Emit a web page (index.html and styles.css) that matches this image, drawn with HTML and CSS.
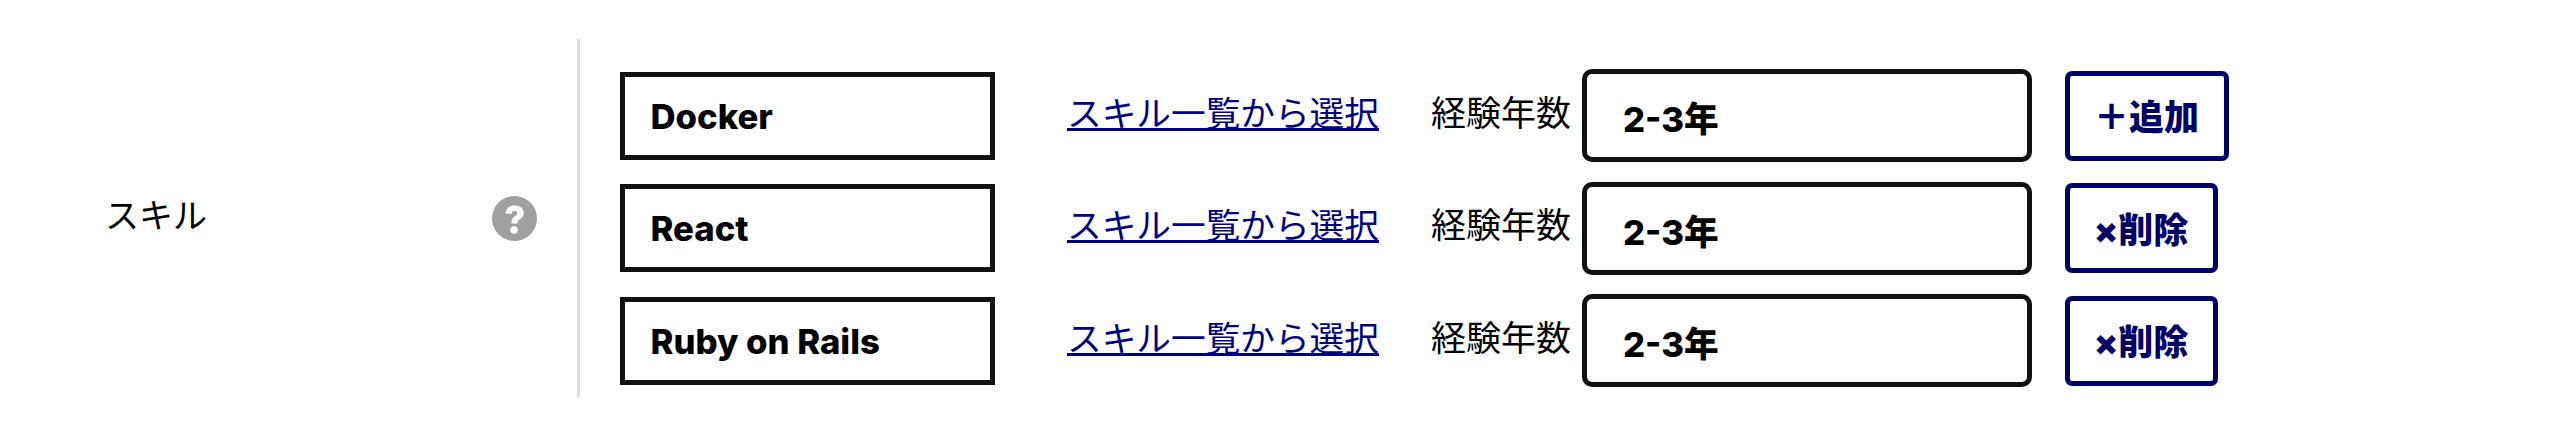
FILE: index.html
```html
<!DOCTYPE html>
<html lang="ja">
<head>
<meta charset="utf-8">
<title>スキル</title>
<link rel="stylesheet" href="styles.css">
</head>
<body>
<div class="field">
  <div class="field-label">
    <span class="label-text">スキル</span>
    <svg class="help" viewBox="0 0 45 45" aria-hidden="true">
      <circle cx="22.5" cy="22.5" r="22.5" fill="#a0a0a0"/>
      <path d="M13.500 17.500c.4-5 3.900-8 9.200-8 5.300 0 9 3 9 7.400 0 3.100-1.600 4.800-3.900 6.400-1.800 1.200-2.400 2-2.400 4.200h-6c-.1-3.700 1-5.500 3.400-7.200 1.700-1.200 2.500-2 2.500-3.100 0-1.400-1.100-2.300-2.700-2.300-1.800 0-2.900 1-3.100 3z" fill="#fff"/>
      <circle cx="22" cy="34" r="3.800" fill="#fff"/>
    </svg>
  </div>
  <div class="field-body">
    <div class="row">
      <input class="skill" type="text" value="Docker">
      <a class="pick" href="#">スキル一覧から選択</a>
      <span class="years-label">経験年数</span>
      <input class="years" type="text" value="2-3年">
      <button class="btn btn-add" type="button">＋追加</button>
    </div>
    <div class="row">
      <input class="skill" type="text" value="React">
      <a class="pick" href="#">スキル一覧から選択</a>
      <span class="years-label">経験年数</span>
      <input class="years" type="text" value="2-3年">
      <button class="btn" type="button">×削除</button>
    </div>
    <div class="row">
      <input class="skill" type="text" value="Ruby on Rails">
      <a class="pick" href="#">スキル一覧から選択</a>
      <span class="years-label">経験年数</span>
      <input class="years" type="text" value="2-3年">
      <button class="btn" type="button">×削除</button>
    </div>
  </div>
</div>
</body>
</html>
```
FILE: styles.css
```css
* { box-sizing: border-box; }
html, body { margin: 0; background: #fff; }
body {
  padding-top: 39px;
  font-family: "Inter", "Noto Sans CJK JP", sans-serif;
  color: #000;
}
.field { display: flex; height: 358px; }
.field-label {
  width: 577px;
  display: flex;
  align-items: center;
  justify-content: space-between;
  padding: 0 40px 0 105px;
}
.label-text {
  font-family: "Noto Sans CJK JP", sans-serif;
  font-size: 34px;
  font-weight: 400;
  position: relative;
  top: -5px;
}
.help { width: 45px; height: 45px; flex: none; filter: blur(.5px); }
.field-body {
  flex: 1;
  border-left: 3px solid #ddd;
  padding: 30px 0 0 40px;
  display: flex;
  flex-direction: column;
  gap: 19.500px;
}
.row { display: flex; align-items: center; height: 93px; }
.skill, .years {
  font-family: "Inter", "Noto Sans CJK JP", sans-serif;
  font-weight: 800;
  font-size: 34.700px;
  color: #000;
  background: #fff;
  outline: none;
}
.skill {
  width: 375px;
  height: 88px;
  border: 5px solid #111;
  border-radius: 0;
  padding: 0 25.500px;
}
.pick {
  margin-left: 72px;
  font-family: "Noto Sans CJK JP", sans-serif;
  font-size: 34.670px;
  font-weight: 400;
  line-height: 1.2;
  color: #000080;
  white-space: nowrap;
  position: relative;
  top: -4px;
}
.years-label {
  margin-left: 52px;
  font-family: "Noto Sans CJK JP", sans-serif;
  font-size: 35px;
  font-weight: 400;
  line-height: 1.2;
  white-space: nowrap;
  position: relative;
  top: -5px;
}
.years {
  margin-left: 11px;
  width: 450px;
  height: 93px;
  border: 5px solid #111;
  border-radius: 10px;
  padding: 3px 36px 0;
}
.btn {
  margin-left: 33px;
  height: 90px;
  padding: 0 25px 2px 24px;
  border: 5px solid #000066;
  border-radius: 7px;
  background: #fff;
  color: #000066;
  font-family: "Inter", "Noto Sans CJK JP", sans-serif;
  font-weight: 900;
  font-size: 35px;
  white-space: nowrap;
}
```
